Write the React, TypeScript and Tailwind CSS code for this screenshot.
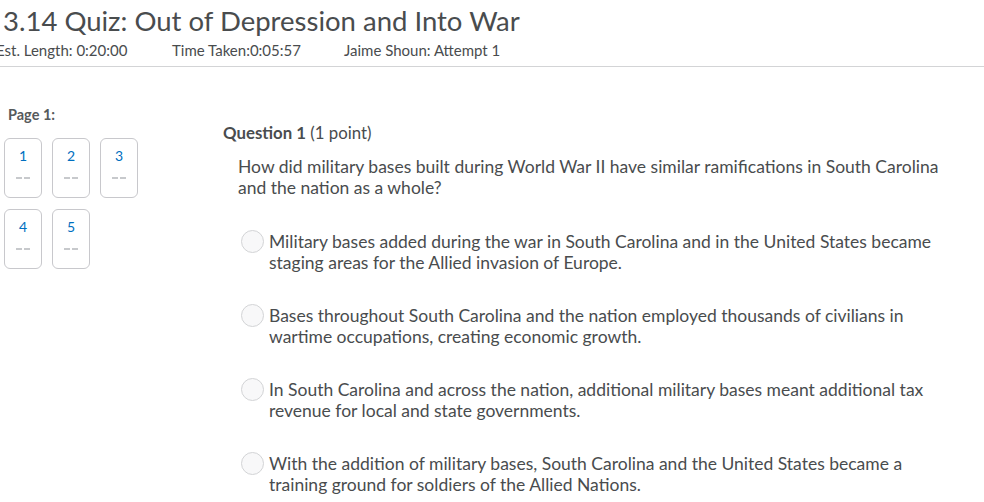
import React from "react";

const options = [
  ["Military bases added during the war in South Carolina and in the United States became", "staging areas for the Allied invasion of Europe."],
  ["Bases throughout South Carolina and the nation employed thousands of civilians in", "wartime occupations, creating economic growth."],
  ["In South Carolina and across the nation, additional military bases meant additional tax", "revenue for local and state governments."],
  ["With the addition of military bases, South Carolina and the United States became a", "training ground for soldiers of the Allied Nations."],
];

function QBox({ n }: { n: number }) {
  return (
    <div className="w-[38px] h-[60px] border border-[#c8c8cc] rounded-[6px] flex flex-col items-center pt-[8px]">
      <span className="text-[14px] leading-[18px] text-[#006fbf]">{n}</span>
      <span className="mt-[12px] flex gap-[2px]">
        <span className="w-[6px] h-[2px] bg-[#c7c9cc]" />
        <span className="w-[6px] h-[2px] bg-[#c7c9cc]" />
      </span>
    </div>
  );
}

export default function App() {
  return (
    <div className="w-[984px] h-[502px] overflow-hidden bg-white text-[#494c4e]" style={{ fontFamily: "Lato, 'Open Sans', sans-serif" }}>
      <div className="pl-[3px] pt-[2px]">
        <h1 className="text-[27.5px] leading-[38px] text-[#494c4e]">3.14 Quiz: Out of Depression and Into War</h1>
        <div className="flex text-[15px] leading-[18px] mt-[1px] ml-[-7px] whitespace-nowrap">
          <span className="w-[176px]">Est. Length: 0:20:00</span>
          <span className="w-[172px]">Time Taken:0:05:57</span>
          <span>Jaime Shoun: Attempt 1</span>
        </div>
      </div>
      <div className="mt-[7px] h-[1px] bg-[#d3d4d6]" />
      <div className="flex">
        <div className="w-[223px] pl-[4px] pt-[40px]">
          <div className="text-[14.5px] leading-[16px] font-bold text-[#565a5c] pl-[4px]">Page 1:</div>
          <div className="mt-[15px] flex flex-wrap gap-x-[10px] gap-y-[11px] w-[150px]">
            {[1, 2, 3, 4, 5].map((n) => (
              <QBox key={n} n={n} />
            ))}
          </div>
        </div>
        <div className="pt-[55px]">
          <div className="text-[16.8px] leading-[22px]">
            <span className="font-bold">Question 1</span> (1 point)
          </div>
          <div className="pl-[15px] mt-[12px] text-[17.5px] leading-[21px] whitespace-nowrap">
            <p>How did military bases built during World War II have similar ramifications in South Carolina</p>
            <p>and the nation as a whole?</p>
          </div>
          <div className="pl-[18px] mt-[33px] flex flex-col gap-[32px]">
            {options.map((o, i) => (
              <div key={i} className="flex">
                <div className="w-[23px] h-[23px] rounded-full border border-[#d3d4d6] bg-[#f8f8f9] mt-[-1px] mr-[5px] shrink-0" />
                <div className="text-[17.5px] leading-[21px] whitespace-nowrap">
                  <p>{o[0]}</p>
                  <p>{o[1]}</p>
                </div>
              </div>
            ))}
          </div>
        </div>
      </div>
    </div>
  );
}
